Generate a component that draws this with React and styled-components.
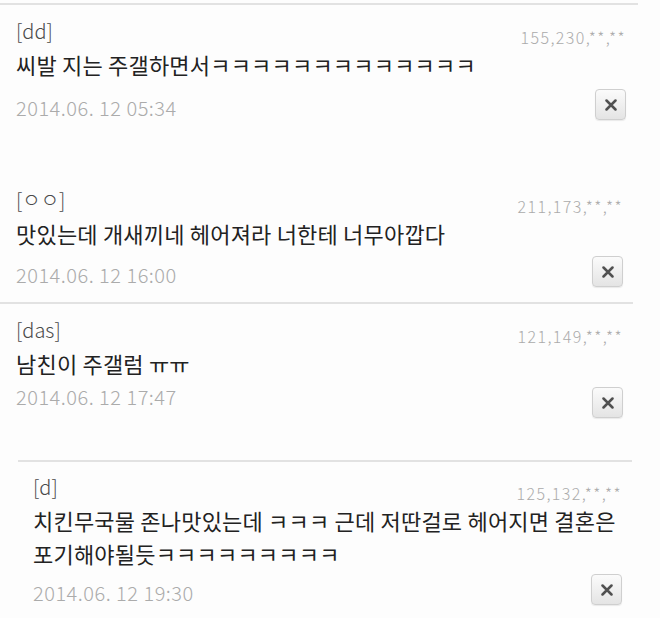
import React from 'react';
import styled, { createGlobalStyle } from 'styled-components';

const GlobalStyle = createGlobalStyle`
  html, body {
    margin: 0;
    padding: 0;
    background: #fdfdfd;
  }
  body {
    font-family: "Noto Sans CJK KR", "Noto Sans", sans-serif;
  }
`;

const Page = styled.div`
  width: 660px;
  padding-top: 3px;
  display: flex;
  flex-direction: column;
`;

const Comment = styled.div`
  width: ${(p) => p.$width}px;
  margin-left: ${(p) => p.$offset || 0}px;
  padding: ${(p) => p.$padTop}px ${(p) => p.$padRight}px ${(p) => p.$padBottom}px ${(p) => p.$padLeft}px;
  box-sizing: border-box;
  border-top: ${(p) => (p.$ruleTop ? '2px solid #e2e2e2' : 'none')};
  border-bottom: ${(p) => (p.$ruleBottom ? '2px solid #e2e2e2' : 'none')};
`;

const Header = styled.div`
  display: flex;
  justify-content: space-between;
  align-items: flex-end;
`;

const Author = styled.span`
  font-size: 20px;
  line-height: 24px;
  font-weight: 300;
  color: #4a4a4a;
`;

const Ip = styled.span`
  font-size: 16px;
  line-height: 16px;
  font-weight: 300;
  letter-spacing: 1.4px;
  color: #ababab;
  margin-bottom: -2px;
`;

const Body = styled.p`
  margin: 5px ${(p) => -(p.$overhang || 0)}px 0 0;
  font-size: 22px;
  line-height: 33px;
  letter-spacing: 0.2px;
  color: #222;
`;

const Footer = styled.div`
  display: flex;
  justify-content: space-between;
  align-items: ${(p) => (p.$align === 'start' ? 'flex-start' : 'flex-end')};
  margin-top: ${(p) => p.$gap}px;
`;

const Date = styled.span`
  font-size: 20px;
  line-height: 24px;
  font-weight: 300;
  letter-spacing: 0.5px;
  color: #ababab;
`;

const DeleteButton = styled.button`
  width: 31px;
  height: 31px;
  padding: 0;
  display: flex;
  align-items: center;
  justify-content: center;
  border: 1px solid #cfcfcf;
  border-radius: 4px;
  background: linear-gradient(#fbfbfb, #e4e4e4);
  box-shadow: 0 1px 1px rgba(0, 0, 0, 0.08);
  margin-top: ${(p) => p.$shift || 0}px;
`;

const comments = [
  {
    author: '[dd]',
    ip: '155,230,**,**',
    text: '씨발 지는 주갤하면서ㅋㅋㅋㅋㅋㅋㅋㅋㅋㅋㅋㅋㅋ',
    date: '2014.06. 12 05:34',
    box: { $width: 638, $padTop: 14, $padBottom: 38, $padLeft: 16, $padRight: 12, $ruleTop: true },
    gap: 8,
  },
  {
    author: '[ㅇㅇ]',
    ip: '211,173,**,**',
    text: '맛있는데 개새끼네 헤어져라 너한테 너무아깝다',
    date: '2014.06. 12 16:00',
    box: { $width: 633, $padTop: 30, $padBottom: 15, $padLeft: 16, $padRight: 10, $ruleBottom: true },
    gap: 6,
  },
  {
    author: '[das]',
    ip: '121,149,**,**',
    text: '남친이 주갤럼 ㅠㅠ',
    date: '2014.06. 12 17:47',
    box: { $width: 633, $padTop: 14, $padBottom: 42, $padLeft: 16, $padRight: 10 },
    gap: 5,
    align: 'start',
    shift: 2,
  },
  {
    author: '[d]',
    ip: '125,132,**,**',
    text: '치킨무국물 존나맛있는데 ㅋㅋㅋ 근데 저딴걸로 헤어지면 결혼은 포기해야될듯ㅋㅋㅋㅋㅋㅋㅋㅋㅋ',
    date: '2014.06. 12 19:30',
    box: { $width: 614, $offset: 18, $padTop: 13, $padBottom: 10, $padLeft: 15, $padRight: 10, $ruleTop: true },
    gap: 4,
    overhang: 6,
  },
];

const CloseIcon = () => (
  <svg width="12" height="12" viewBox="0 0 12 12">
    <path d="M1.5 1.5 L10.5 10.5 M10.5 1.5 L1.5 10.5" stroke="#505050" strokeWidth="2.5" strokeLinecap="round" />
  </svg>
);

const App = () => {
  return (
    <Page>
      <GlobalStyle />
      {comments.map((c) => (
        <Comment key={c.date} {...c.box}>
          <Header>
            <Author>{c.author}</Author>
            <Ip>{c.ip}</Ip>
          </Header>
          <Body $overhang={c.overhang}>{c.text}</Body>
          <Footer $gap={c.gap} $align={c.align}>
            <Date>{c.date}</Date>
            <DeleteButton $shift={c.shift} aria-label="삭제">
              <CloseIcon />
            </DeleteButton>
          </Footer>
        </Comment>
      ))}
    </Page>
  );
};

export default App;
